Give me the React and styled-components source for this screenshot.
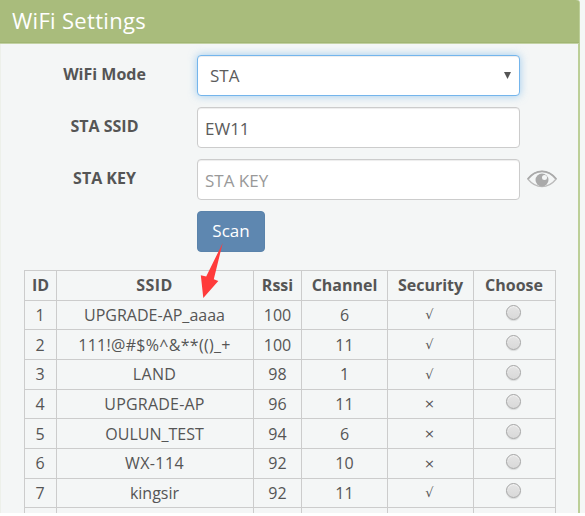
import React from "react";
import styled, { createGlobalStyle } from "styled-components";

const Global = createGlobalStyle`
  * { box-sizing: border-box; }
  body { margin: 0; background: #fff; overflow: hidden; }
  input, select, button { font: inherit; }
`;

const Page = styled.main`
  width: 585px;
  height: 513px;
  overflow: hidden;
  background: #f4f6f6;
  font-family: "Open Sans", "Noto Sans", sans-serif;
  color: #555;
`;

const Panel = styled.section`
  width: 580px;
  height: 513px;
  border-right: 2px solid #bccf98;
  border-left: 1px solid #edf0ea;
  border-top-right-radius: 3px;
`;

const PanelHeader = styled.header`
  height: 44px;
  margin: 0 -1px;
  padding: 0 0 3px 12px;
  display: flex;
  align-items: center;
  background: #a9bc7c;
  border-bottom: 1px solid #c3d2a4;
  border-top-right-radius: 3px;
  box-shadow: inset 0 -1px #a1b573;
`;

const Title = styled.h1`
  margin: 0;
  font-size: 22px;
  line-height: 28px;
  font-weight: 400;
  letter-spacing: 0.3px;
  color: #fff;
`;

const Form = styled.form`
  padding: 11px 0 0 23px;
  display: grid;
  grid-template-columns: 173px 323px auto;
  grid-auto-rows: 41px;
  row-gap: 11px;
`;

const Label = styled.label`
  padding: 0 12px 3px 0;
  display: flex;
  align-items: center;
  justify-content: center;
  font-size: 16px;
  font-weight: 700;
`;

const Field = styled.input`
  width: 323px;
  height: 41px;
  padding: 1px 8px 0 7px;
  border: 1px solid #ccc;
  border-radius: 4px;
  outline: none;
  background: #fff;
  box-shadow: inset 0 1px 1px rgba(0, 0, 0, 0.075);
  font-size: 17px;
  color: #5c5c5c;
  &::placeholder { color: #999; opacity: 1; }
`;

const ModeSelect = styled.div`
  width: 323px;
  height: 41px;
  padding: 0 8px 0 12px;
  display: flex;
  align-items: center;
  justify-content: space-between;
  border: 1px solid #74b5ec;
  border-radius: 4px;
  background: #fff;
  box-shadow: inset 0 1px 1px rgba(0, 0, 0, 0.075), 0 0 8px rgba(102, 175, 233, 0.6);
  font-size: 17px;
  color: #5c5c5c;
`;

const EyeButton = styled.span`
  height: 40px;
  padding-left: 7px;
  display: flex;
  align-items: center;
`;

const ScanButton = styled.button`
  grid-column: 2;
  width: 68px;
  height: 41px;
  padding: 0 0 2px;
  border: 1px solid #5a83ab;
  border-radius: 4px;
  background: #5e87b0;
  font-size: 17px;
  color: #fff;
`;

const Table = styled.div`
  width: 532px;
  margin: 18px 0 0 23px;
  border-top: 1px solid #ccc;
  border-left: 1px solid #ccc;
`;

const Row = styled.div`
  display: grid;
  grid-template-columns: 32px 197px 48px 86px 86px 82px;
  height: 29.67px;
  font-size: 16px;
  font-weight: ${(p) => (p.$head ? 700 : 400)};
`;

const Cell = styled.div`
  display: flex;
  align-items: center;
  justify-content: center;
  padding-right: ${(p) => p.$inset || 0}px;
  letter-spacing: ${(p) => p.$tracking || 0}px;
  border-right: 1px solid #ccc;
  border-bottom: 1px solid #ccc;
`;

const Mark = styled.span`
  font-family: "DejaVu Sans", sans-serif;
  font-size: 13px;
`;

const Radio = styled.span`
  width: 15px;
  height: 15px;
  margin-bottom: 4px;
  border: 1px solid #a5a5a5;
  border-radius: 50%;
  background: linear-gradient(#e4e4e4, #d9d9d9);
  box-shadow: inset 0 1px 1px #f3f3f3, 0 1px 1px rgba(0, 0, 0, 0.12);
`;

const Arrow = styled.svg`
  position: absolute;
  left: 200px;
  top: 243px;
`;

const networks = [
  [1, "UPGRADE-AP_aaaa", 100, 6, true, 0],
  [2, "111!@#$%^&**(()_+", 100, 11, true, 0.3],
  [3, "LAND", 98, 1, true, 0.3],
  [4, "UPGRADE-AP", 96, 11, false, 0.2],
  [5, "OULUN_TEST", 94, 6, false, 0],
  [6, "WX-114", 92, 10, false, 0.4],
  [7, "kingsir", 92, 11, true, 0],
];

const heads = ["ID", "SSID", "Rssi", "Channel", "Security", "Choose"];

export default function App() {
  return (
    <Page>
      <Global />
      <Panel>
        <PanelHeader><Title>WiFi Settings</Title></PanelHeader>
        <Form onSubmit={(e) => e.preventDefault()}>
          <Label>WiFi Mode</Label>
          <ModeSelect>
            STA
            <svg width="7" height="7" viewBox="0 0 7 7"><path d="M0 0H7L3.5 7Z" fill="#555" /></svg>
          </ModeSelect>
          <span />
          <Label>STA SSID</Label>
          <Field defaultValue="EW11" />
          <span />
          <Label>STA KEY</Label>
          <Field placeholder="STA KEY" />
          <EyeButton>
            <svg width="30" height="18" viewBox="0 0 30 18">
              <path d="M.8 9Q7 1.4 15 1.4T29.2 9Q23 16.6 15 16.6T.8 9Z" fill="none" stroke="#bbb" strokeWidth="1.3" />
              <path d="M.8 9Q7 1.4 15 1.4T29.2 9" fill="none" stroke="#aaa" strokeWidth="1.8" />
              <circle cx="15" cy="10" r="6.5" fill="#aaa" />
              <circle cx="17.5" cy="7.6" r="2.5" fill="#f4f6f6" />
            </svg>
          </EyeButton>
          <ScanButton>Scan</ScanButton>
        </Form>
        <Table>
          <Row $head>
            {heads.map((h) => (
              <Cell key={h} $inset={h === "SSID" || h === "Choose" ? 1 : 0} $tracking={h === "SSID" ? 0.4 : 0}>{h}</Cell>
            ))}
          </Row>
          {networks.map(([id, ssid, rssi, channel, secure, tracking]) => (
            <Row key={id}>
              <Cell $inset={1}>{id}</Cell>
              <Cell $inset={1} $tracking={tracking}>{ssid}</Cell>
              <Cell>{rssi}</Cell>
              <Cell>{channel}</Cell>
              <Cell $inset={2}><Mark>{secure ? "√" : "×"}</Mark></Cell>
              <Cell $inset={3}><Radio /></Cell>
            </Row>
          ))}
          <Row>{heads.map((h) => <Cell key={h} />)}</Row>
        </Table>
      </Panel>
      <Arrow width="24" height="56" viewBox="0 0 24 56">
        <path d="M22.7 0L6.2 33.5L.8 32.3L3.3 55L18.3 38L13.8 36.2Z" fill="#ff3b3b" />
      </Arrow>
    </Page>
  );
}
